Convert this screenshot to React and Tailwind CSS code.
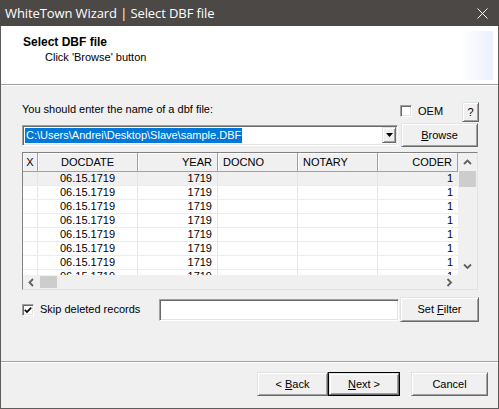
import React from "react";

const raised =
  "bg-[#f0f0f0] border border-t-[#e3e3e3] border-l-[#e3e3e3] border-r-[#696969] border-b-[#696969] shadow-[inset_1px_1px_0_#ffffff,inset_-1px_-1px_0_#a0a0a0]";
const sunken =
  "bg-white border border-t-[#a0a0a0] border-l-[#a0a0a0] border-r-white border-b-white shadow-[inset_1px_1px_0_#696969,inset_-1px_-1px_0_#e3e3e3]";

function Chevron({ dir }) {
  const paths = {
    up: "M1 5 L4.5 1.5 L8 5",
    down: "M1 1.5 L4.5 5 L8 1.5",
    left: "M5 1 L1.5 4.5 L5 8",
    right: "M1.5 1 L5 4.5 L1.5 8",
  };
  const box = dir === "up" || dir === "down" ? "0 0 9 7" : "0 0 7 9";
  const w = dir === "up" || dir === "down" ? 9 : 7;
  const h = dir === "up" || dir === "down" ? 7 : 9;
  return (
    <svg width={w} height={h} viewBox={box}>
      <path d={paths[dir]} fill="none" stroke="#606060" strokeWidth="1.8" />
    </svg>
  );
}

function Btn({ children, className = "" }) {
  return (
    <div className={`${raised} flex items-center justify-center ${className}`}>
      {children}
    </div>
  );
}

const rows = Array.from({ length: 8 });

export default function App() {
  return (
    <div className="w-[499px] h-[409px] flex flex-col font-['Liberation_Sans',Arial,sans-serif] text-[11px] text-black bg-[#f0f0f0] overflow-hidden">
      {/* Title bar */}
      <div className="h-[26px] shrink-0 bg-[#4b4846] flex items-center justify-between pl-[5px] pr-[11px]">
        <span className="text-white text-[13px] leading-none font-['Open_Sans','Liberation_Sans',sans-serif] tracking-[-0.1px]">
          WhiteTown Wizard | Select DBF file
        </span>
        <svg width="11" height="11" viewBox="0 0 11 11">
          <path d="M0.5 0.5 L10.5 10.5 M10.5 0.5 L0.5 10.5" stroke="#ffffff" strokeWidth="1" />
        </svg>
      </div>

      <div className="flex-1 flex flex-col border-x border-b border-[#5f5d5b]">
        {/* Header */}
        <div className="h-[58px] shrink-0 bg-white flex justify-between">
          <div className="pt-[9px] pl-[22px]">
            <div className="font-bold text-[12px] leading-[14px]">Select DBF file</div>
            <div className="pl-[22px] leading-[16px]">Click 'Browse' button</div>
          </div>
          <div className="w-[33px] h-[49px] mt-[5px] mr-[5px] bg-linear-to-r from-white to-[#ebf0fb]" />
        </div>
        <div className="h-[1px] bg-[#a0a0a0]" />
        <div className="h-[1px] bg-white" />

        {/* Content */}
        <div className="h-[275px] shrink-0 flex flex-col pl-[21px] pr-[19px] pt-[16px]">
          {/* Row 1 */}
          <div className="h-[20px] flex items-start">
            <div className="leading-[14px] flex-1">You should enter the name of a dbf file:</div>
            <div className="flex items-center mt-[3px] w-[62px]">
              <div className={`${sunken} w-[12px] h-[12px]`} />
              <span className="ml-[6px] leading-[12px]">OEM</span>
            </div>
            <Btn className="w-[17px] h-[20px]">?</Btn>
          </div>

          {/* Row 2 */}
          <div className="mt-[1px] flex items-center">
            <div className={`${sunken} w-[376px] h-[21px] flex items-center pl-[2px] pr-[1px]`}>
              <span className="bg-[#0078d7] text-white leading-[15px] px-[1px]">
                C:\Users\Andrei\Desktop\Slave\sample.DBF
              </span>
              <div className="flex-1" />
              <div className={`${raised} w-[14px] h-[16px] flex items-center justify-center`}>
                <svg width="7" height="4" viewBox="0 0 7 4">
                  <path d="M0 0 H7 L3.5 4 Z" fill="#000" />
                </svg>
              </div>
            </div>
            <Btn className="ml-[3px] w-[77px] h-[24px]">
              <span>
                <u>B</u>rowse
              </span>
            </Btn>
          </div>

          {/* Grid */}
          <div className="mt-[5px] w-[456px] h-[138px] border border-t-[#828282] border-l-[#828282] border-r-[#e3e3e3] border-b-[#e3e3e3] bg-white flex flex-col">
            <div className="flex h-[122px]">
              <div className="w-[435px] flex flex-col overflow-hidden">
                {/* header */}
                <div className="grid grid-cols-[15px_100px_80px_80px_80px_80px] h-[19px] shrink-0 bg-[#f0f0f0] border-b border-[#a0a0a0] leading-[18px]">
                  <div className="border-r border-[#a0a0a0] text-center shadow-[inset_1px_1px_0_#ffffff]">X</div>
                  <div className="border-r border-[#a0a0a0] text-center shadow-[inset_1px_1px_0_#ffffff]">DOCDATE</div>
                  <div className="border-r border-[#a0a0a0] text-right pr-[5px] shadow-[inset_1px_1px_0_#ffffff]">YEAR</div>
                  <div className="border-r border-[#a0a0a0] pl-[5px] shadow-[inset_1px_1px_0_#ffffff]">DOCNO</div>
                  <div className="border-r border-[#a0a0a0] pl-[5px] shadow-[inset_1px_1px_0_#ffffff]">NOTARY</div>
                  <div className="border-r border-[#a0a0a0] text-right pr-[5px] shadow-[inset_1px_1px_0_#ffffff]">CODER</div>
                </div>
                {rows.map((_, i) => (
                  <div
                    key={i}
                    className={`grid grid-cols-[15px_100px_80px_80px_80px_80px] h-[14px] shrink-0 leading-[13px] border-b border-[#ececec] ${
                      i === 0 ? "bg-[#f0f0f0]" : "bg-white"
                    }`}
                  >
                    <div className="border-r border-[#e6e6e6]" />
                    <div className="border-r border-[#e6e6e6] text-center">06.15.1719</div>
                    <div className="border-r border-[#e6e6e6] text-right pr-[5px]">1719</div>
                    <div className="border-r border-[#e6e6e6]" />
                    <div className="border-r border-[#e6e6e6]" />
                    <div className="text-right pr-[5px]">1</div>
                  </div>
                ))}
              </div>
              {/* vertical scrollbar */}
              <div className="flex-1 bg-[#f0f0f0] flex flex-col">
                <div className="h-[18px] flex items-center justify-center">
                  <Chevron dir="up" />
                </div>
                <div className="h-[16px] mx-[1px] bg-[#cdcdcd]" />
                <div className="flex-1" />
                <div className="h-[18px] flex items-center justify-center">
                  <Chevron dir="down" />
                </div>
              </div>
            </div>
            {/* horizontal scrollbar */}
            <div className="flex flex-1 bg-[#f0f0f0]">
              <div className="w-[435px] flex">
                <div className="w-[17px] flex items-center justify-center">
                  <Chevron dir="left" />
                </div>
                <div className="w-[17px] my-[1px] bg-[#cdcdcd]" />
                <div className="flex-1" />
                <div className="w-[17px] flex items-center justify-center">
                  <Chevron dir="right" />
                </div>
              </div>
              <div className="flex-1" />
            </div>
          </div>

          {/* Row 3 */}
          <div className="mt-[7px] flex items-center">
            <div className={`${sunken} w-[12px] h-[12px] flex items-center justify-center`}>
              <svg width="8" height="8" viewBox="0 0 8 8">
                <path d="M0.8 3.8 L3 6 L7.2 1.6" fill="none" stroke="#000" strokeWidth="1.7" />
              </svg>
            </div>
            <span className="ml-[6px] w-[119px]">Skip deleted records</span>
            <div className={`${sunken} w-[240px] h-[22px]`} />
            <Btn className="ml-[1px] w-[79px] h-[25px]">
              <span>
                Set <u>F</u>ilter
              </span>
            </Btn>
          </div>
        </div>

        <div className="h-[1px] bg-[#a0a0a0]" />
        <div className="h-[1px] bg-white" />

        {/* Buttons */}
        <div className="flex-1 flex justify-end items-start pt-[9px] pr-[10px]">
          <Btn className="w-[71px] h-[24px]">
            <span>
              &lt; <u>B</u>ack
            </span>
          </Btn>
          <div className="w-[72px] h-[24px] border border-black flex">
            <div className={`${raised} flex-1 flex items-center justify-center`}>
              <span>
                <u>N</u>ext &gt;
              </span>
            </div>
          </div>
          <Btn className="ml-[11px] w-[77px] h-[24px]">Cancel</Btn>
        </div>
      </div>
    </div>
  );
}
